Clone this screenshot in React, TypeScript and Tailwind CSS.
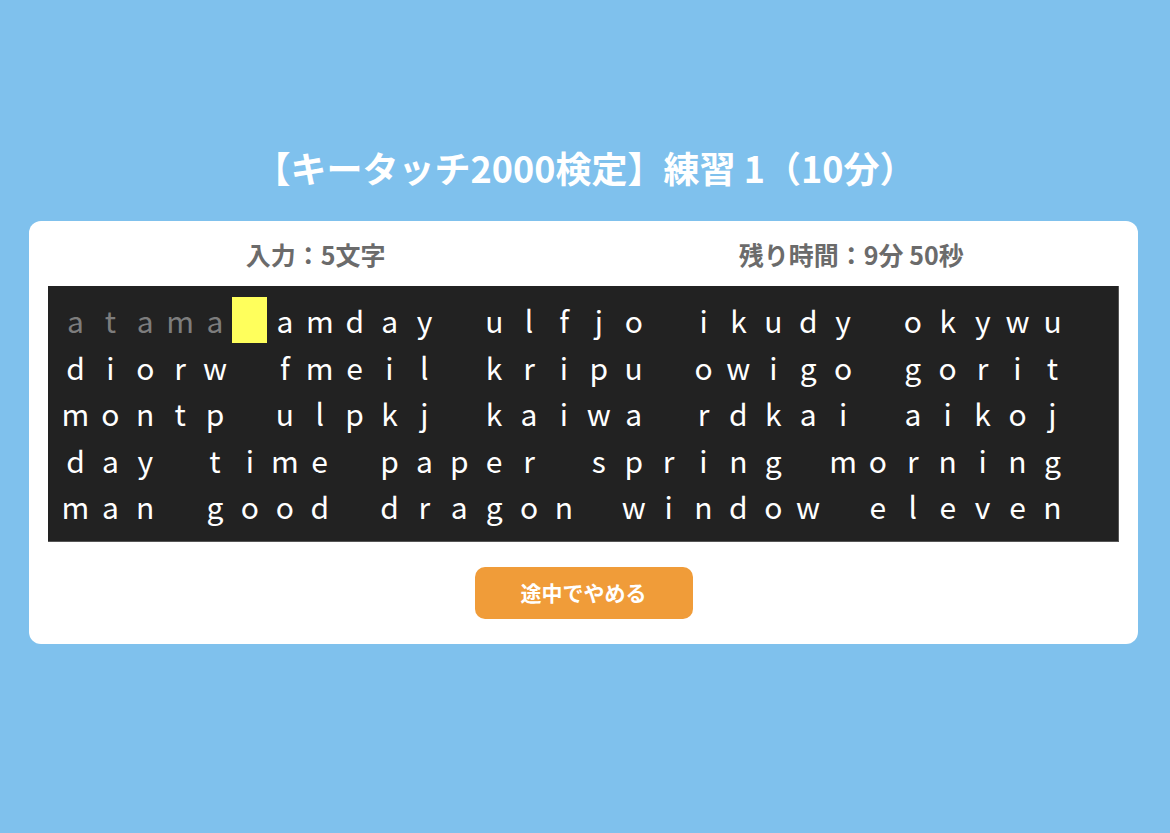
const rows: string[] = [
  "atama amday ulfjo ikudy okywu",
  "diorw fmeil kripu owigo gorit",
  "montp ulpkj kaiwa rdkai aikoj",
  "day time paper spring morning",
  "man good dragon window eleven",
];

const typed = 5;

function Cell({ ch, state }: { ch: string; state: "done" | "cursor" | "todo" }) {
  if (state === "cursor") {
    return <span className="w-[35px] h-[46px] shrink-0 bg-[#ffff5c]" />;
  }
  return (
    <span
      className={`w-[34.9px] h-[46.5px] shrink-0 flex items-center justify-center ${
        state === "done" ? "text-[#7d7d7d]" : "text-white"
      }`}
    >
      {ch === " " ? "\u00a0" : ch}
    </span>
  );
}

export default function App() {
  let offset = 0;
  return (
    <div
      className="min-h-[833px] bg-[#7fc1ed] flex flex-col items-center pt-[140px]"
      style={{ fontFamily: '"Noto Sans CJK JP", "Noto Sans", sans-serif' }}
    >
      <h1 className="text-white font-bold text-[36px] leading-[54px]">
        【キータッチ2000検定】練習 1（10分）
      </h1>

      <div className="mt-[27px] w-[1109px] ml-[-3px] bg-white rounded-[12px] px-[19px] pt-[17px] pb-[25px] flex flex-col items-center">
        {/* status */}
        <div className="w-full grid grid-cols-2 text-[#6b6b6b] font-bold text-[25px] leading-[32px]">
          <div className="text-center">入力：5文字</div>
          <div className="text-center">残り時間：9分 50秒</div>
        </div>

        {/* typing area */}
        <div className="mt-[16px] w-full bg-[#222222] border-b border-r border-[#555] pl-[10px] py-[11px] text-[30px] leading-none">
          {rows.map((row, r) => {
            const start = offset;
            offset += row.length + 1;
            return (
              <div key={r} className="flex">
                {row.split("").map((ch, i) => {
                  const idx = start + i;
                  const state = idx < typed ? "done" : idx === typed ? "cursor" : "todo";
                  return <Cell key={i} ch={ch} state={state} />;
                })}
              </div>
            );
          })}
        </div>

        <button className="mt-[25px] w-[218px] h-[52px] rounded-[10px] bg-[#f09c39] text-white font-bold text-[21px]">
          途中でやめる
        </button>
      </div>
    </div>
  );
}
